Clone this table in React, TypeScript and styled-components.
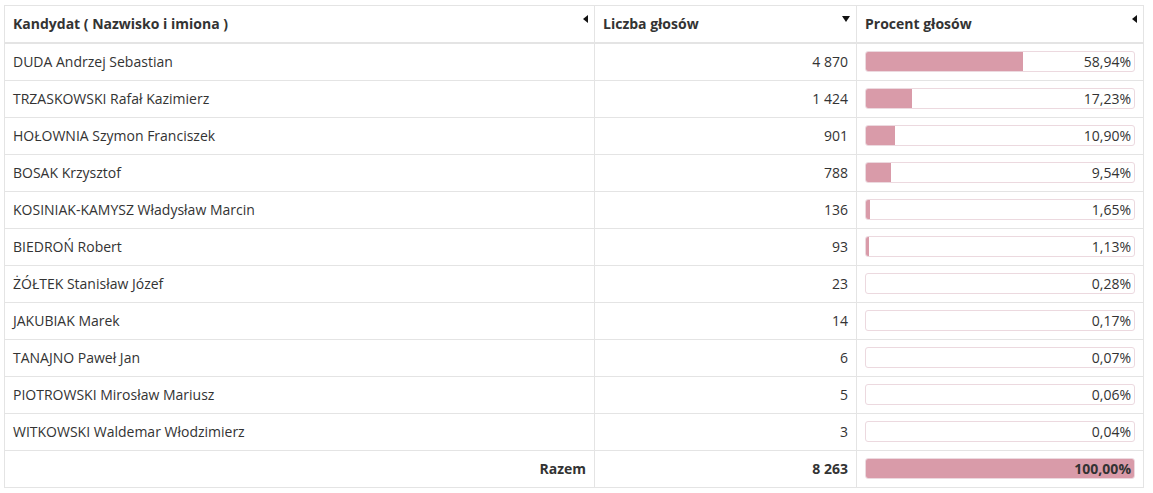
import { FunctionComponent } from "react";
import styled, { createGlobalStyle, css } from "styled-components";

type Candidate = {
  name: string;
  votes: string;
  percent: number;
};

const candidates: Candidate[] = [
  { name: "DUDA Andrzej Sebastian", votes: "4 870", percent: 58.94 },
  { name: "TRZASKOWSKI Rafał Kazimierz", votes: "1 424", percent: 17.23 },
  { name: "HOŁOWNIA Szymon Franciszek", votes: "901", percent: 10.9 },
  { name: "BOSAK Krzysztof", votes: "788", percent: 9.54 },
  { name: "KOSINIAK-KAMYSZ Władysław Marcin", votes: "136", percent: 1.65 },
  { name: "BIEDROŃ Robert", votes: "93", percent: 1.13 },
  { name: "ŻÓŁTEK Stanisław Józef", votes: "23", percent: 0.28 },
  { name: "JAKUBIAK Marek", votes: "14", percent: 0.17 },
  { name: "TANAJNO Paweł Jan", votes: "6", percent: 0.07 },
  { name: "PIOTROWSKI Mirosław Mariusz", votes: "5", percent: 0.06 },
  { name: "WITKOWSKI Waldemar Włodzimierz", votes: "3", percent: 0.04 },
];

const BAR_WIDTH = 268;

const formatPercent = (value: number) => value.toFixed(2).replace(".", ",") + "%";

const GlobalStyle = createGlobalStyle`
  body {
    margin: 0;
    background: #fff;
    font-family: "Open Sans", "Noto Sans", sans-serif;
    color: #333;
  }
`;

type SortDir = "left" | "down";

const ProgressBar: FunctionComponent<{ percent: number; bold?: boolean }> = ({
  percent,
  bold = false,
}) => (
  <Bar>
    <Fill style={{ width: Math.floor((percent * BAR_WIDTH) / 100) }} />
    <BarLabel bold={bold}>{formatPercent(percent)}</BarLabel>
  </Bar>
);

export default function App() {
  return (
    <>
      <GlobalStyle />
      <Page>
        <Table>
          <colgroup>
            <col style={{ width: 590 }} />
            <col style={{ width: 262 }} />
            <col style={{ width: 287 }} />
          </colgroup>
          <thead>
            <tr>
              <HeadCell>
                Kandydat ( Nazwisko i imiona )
                <SortArrow dir="left" />
              </HeadCell>
              <HeadCell>
                Liczba głosów
                <SortArrow dir="down" />
              </HeadCell>
              <HeadCell>
                Procent głosów
                <SortArrow dir="left" />
              </HeadCell>
            </tr>
          </thead>
          <tbody>
            {candidates.map((c) => (
              <tr key={c.name}>
                <Cell>{c.name}</Cell>
                <Cell align="right">{c.votes}</Cell>
                <Cell>
                  <ProgressBar percent={c.percent} />
                </Cell>
              </tr>
            ))}
            <tr>
              <Cell align="right" bold>
                Razem
              </Cell>
              <Cell align="right" bold>
                8 263
              </Cell>
              <Cell>
                <ProgressBar percent={100} bold />
              </Cell>
            </tr>
          </tbody>
        </Table>
      </Page>
    </>
  );
}

const Page = styled.div`
  padding: 5px 4px;
`;

const Table = styled.table`
  width: 1139px;
  border-collapse: collapse;
  table-layout: fixed;
  font-size: 14px;
`;

const HeadCell = styled.th`
  position: relative;
  height: 35px;
  padding: 0 8px 1px;
  text-align: left;
  font-weight: 700;
  border: 1px solid #e4e4e4;
  border-bottom: 2px solid #e4e4e4;
`;

const SortArrow = styled.span<{ dir: SortDir }>`
  position: absolute;
  width: 0;
  height: 0;
  ${({ dir }) =>
    dir === "left"
      ? css`
          top: 9px;
          right: 6px;
          border-top: 4px solid transparent;
          border-bottom: 4px solid transparent;
          border-right: 5px solid #111;
        `
      : css`
          top: 10px;
          right: 6px;
          border-left: 4px solid transparent;
          border-right: 4px solid transparent;
          border-top: 6px solid #111;
        `}
`;

const Cell = styled.td<{ align?: "left" | "right"; bold?: boolean }>`
  height: 35px;
  padding: 0 8px 1px;
  border: 1px solid #e4e4e4;
  text-align: ${({ align }) => align ?? "left"};
  font-weight: ${({ bold }) => (bold ? 700 : 400)};
  white-space: nowrap;
`;

const Bar = styled.div`
  position: relative;
  height: 19px;
  border: 1px solid #ecd9df;
  border-radius: 3px;
  overflow: hidden;
  background: #fff;
  display: flex;
  align-items: center;
  justify-content: flex-end;
`;

const Fill = styled.div`
  position: absolute;
  top: 0;
  bottom: 0;
  left: 0;
  background: #d99ba9;
`;

const BarLabel = styled.span<{ bold: boolean }>`
  position: relative;
  padding-right: 3px;
  font-size: 14px;
  line-height: 19px;
  font-weight: ${({ bold }) => (bold ? 700 : 400)};
`;
